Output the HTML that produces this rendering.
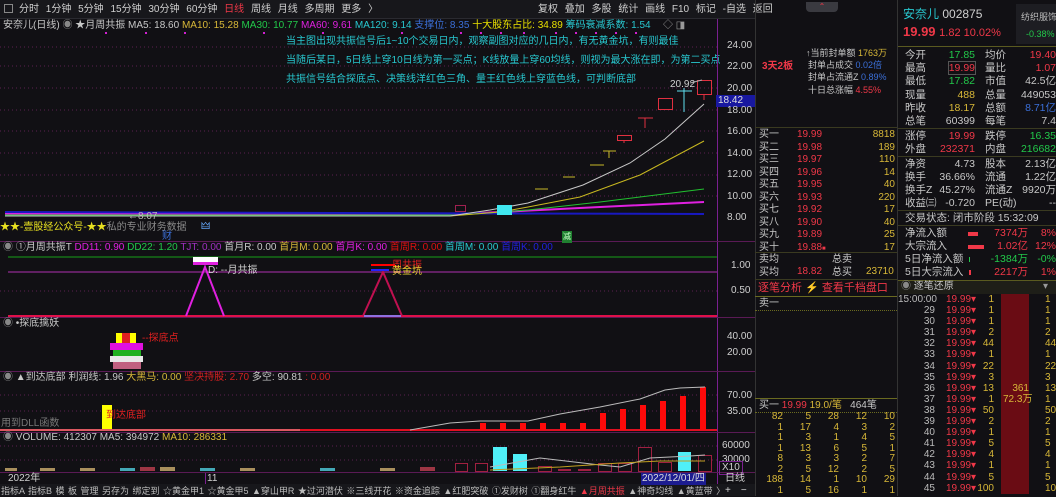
<!DOCTYPE html><html><head><meta charset="utf-8"><style>
*{margin:0;padding:0;box-sizing:border-box}
body{width:1056px;height:496px;background:#111014;overflow:hidden;position:relative;font-family:"Liberation Sans","Noto Sans CJK SC",sans-serif;font-size:10px;color:#c8c8c8}
.a{position:absolute;white-space:nowrap;line-height:12px}
.r{color:#f03848}.g{color:#22c84a}.y{color:#d8b838}.c{color:#28c8d0}.w{color:#d0d0d0}.m{color:#e020e0}.b{color:#3b6fd8}
.rt{text-align:right}
</style></head><body>
<div class="a" style="left:0;top:0;width:755px;height:19px;background:#17171b;border-bottom:1px solid #2a2a30"></div>
<div class="a" style="left:4px;top:4px;width:9px;height:9px;border:1px solid #888"></div>
<div class="a w" style="left:19px;top:4px;word-spacing:4px">分时 1分钟 5分钟 15分钟 30分钟 60分钟 <span class="r">日线</span> 周线 月线 多周期 更多 〉</div>
<div class="a w" style="left:538px;top:4px;word-spacing:4px">复权 叠加 多股 统计 画线 F10 标记 -自选 返回</div>
<div class="a" style="left:806px;top:2px;width:32px;height:10px;background:#3a3a40;border-radius:0 0 4px 4px;color:#f03848;font-size:8px;text-align:center;line-height:9px">⌃</div>
<div class="a" style="left:3px;top:20px">安奈儿(日线) <span style="color:#888">◉</span> ★月周共振 MA5: 18.60 <span class="y">MA10: 15.28</span> <span class="g">MA30: 10.77</span> <span class="m">MA60: 9.61</span> <span class="c">MA120: 9.14</span> <span class="b">支撑位: 8.35</span> <span style="color:#e8e000">十大股东占比: 34.89</span> <span class="c">筹码衰减系数: 1.54</span></div>
<div class="a" style="left:663px;top:20px;color:#999">◇ ◨</div>
<div class="a c" style="left:286px;top:36px">当主图出现共振信号后1~10个交易日内，观察副图对应的几日内，有无黄金坑，有则最佳</div>
<div class="a c" style="left:286px;top:55px">当随后某日，5日线上穿10日线为第一买点；K线放量上穿60均线，则视为最大涨在即，为第二买点</div>
<div class="a c" style="left:286px;top:74px">共振信号结合探底点、决策线洋红色三角、量王红色线上穿蓝色线，可判断底部</div>
<svg class="a" style="left:0;top:0" width="756" height="496">
<g stroke="#5a2050" stroke-dasharray="1 3"><line x1="0" y1="47" x2="717" y2="47"/><line x1="0" y1="66" x2="717" y2="66"/><line x1="0" y1="88" x2="717" y2="88"/><line x1="0" y1="110" x2="717" y2="110"/><line x1="0" y1="131" x2="717" y2="131"/><line x1="0" y1="153" x2="717" y2="153"/><line x1="0" y1="175" x2="717" y2="175"/><line x1="0" y1="196" x2="717" y2="196"/><line x1="0" y1="291" x2="717" y2="291"/><line x1="0" y1="395" x2="717" y2="395"/><line x1="0" y1="411" x2="717" y2="411"/><line x1="0" y1="446" x2="717" y2="446"/><line x1="0" y1="460" x2="717" y2="460"/></g>
<g fill="#d020d0"><rect x="105" y="32" width="2" height="2"/><rect x="145" y="32" width="2" height="2"/><rect x="184" y="32" width="2" height="2"/><rect x="263" y="32" width="2" height="2"/><rect x="322" y="32" width="2" height="2"/><rect x="401" y="32" width="2" height="2"/><rect x="460" y="32" width="2" height="2"/><rect x="480" y="32" width="2" height="2"/><rect x="500" y="32" width="2" height="2"/><rect x="523" y="32" width="2" height="2"/><rect x="555" y="32" width="2" height="2"/><rect x="575" y="32" width="2" height="2"/><rect x="595" y="32" width="2" height="2"/><rect x="615" y="32" width="2" height="2"/><rect x="635" y="32" width="2" height="2"/></g>
<line x1="717.5" y1="19" x2="717.5" y2="484" stroke="#7a2090"/>
<g stroke="#5a1a55"><line x1="0" y1="241.5" x2="755" y2="241.5"/><line x1="0" y1="317.5" x2="755" y2="317.5"/><line x1="0" y1="371.5" x2="755" y2="371.5"/><line x1="0" y1="432.5" x2="755" y2="432.5"/><line x1="0" y1="472.5" x2="755" y2="472.5"/></g>
<polyline points="5,214 460,214 520,211 600,207 704,202" fill="none" stroke="#e020e0" stroke-width="2"/>
<line x1="5" y1="212" x2="704" y2="214" stroke="#1818c0" stroke-width="2"/>
<polyline points="5,215 460,215 528,210 600,202 704,189" fill="none" stroke="#22c030" stroke-width="1"/>
<polyline points="5,216 450,216 500,212 528,207 580,197 640,175 704,141" fill="none" stroke="#c8b820" stroke-width="1"/>
<polyline points="5,216 450,216 490,210 528,203 583,185 630,163 665,139 704,104" fill="none" stroke="#c8c8c8" stroke-width="1"/>
<g stroke="#c8b828"><line x1="535" y1="189" x2="548" y2="189"/><line x1="563" y1="177" x2="575" y2="177"/><line x1="590" y1="165" x2="604" y2="165"/><line x1="603" y1="151" x2="616" y2="151"/><line x1="609" y1="151" x2="609" y2="158"/></g>
<rect x="497" y="205" width="15" height="10" fill="#40e8f0"/>
<rect x="617.5" y="135.5" width="14" height="5" fill="none" stroke="#e03040"/>
<line x1="624" y1="140" x2="624" y2="143" stroke="#e03040"/>
<g stroke="#e03040"><line x1="638" y1="118" x2="653" y2="118"/><line x1="645" y1="118" x2="645" y2="128"/></g>
<rect x="658.5" y="98.5" width="14" height="11" fill="none" stroke="#e03040"/>
<g stroke="#60e0f0"><line x1="677" y1="91" x2="692" y2="91"/><line x1="684" y1="88" x2="684" y2="112"/></g>
<rect x="697.5" y="80.5" width="14" height="14" fill="none" stroke="#e03040"/>
<line x1="704" y1="95" x2="704" y2="100" stroke="#e03040"/>
<line x1="690" y1="83" x2="702" y2="80" stroke="#aaa"/>
<rect x="455.5" y="205.5" width="10" height="6" fill="none" stroke="#a02050"/>
<line x1="8" y1="257" x2="717" y2="257" stroke="#18a018"/>
<line x1="8" y1="272" x2="717" y2="272" stroke="#b030b0"/>
<line x1="8" y1="316" x2="717" y2="316" stroke="#e0104a" stroke-width="2"/>
<rect x="193" y="257" width="25" height="5" fill="#fff"/><rect x="193" y="262" width="25" height="3" fill="#e020e0"/>
<polyline points="186,316 205,267 224,316" fill="none" stroke="#e020e0" stroke-width="2"/>
<polyline points="363,316 383,272 402,316" fill="none" stroke="#c01050" stroke-width="2"/>
<line x1="364" y1="316" x2="401" y2="316" stroke="#9070e0" stroke-width="2"/>
<rect x="371" y="264" width="24" height="2" fill="#f00"/><rect x="371" y="269" width="18" height="2" fill="#22f"/>
<rect x="116" y="333" width="6" height="10" fill="#ff0"/><rect x="122" y="333" width="8" height="10" fill="#e02020"/><rect x="130" y="333" width="6" height="10" fill="#ff0"/>
<rect x="110" y="343" width="33" height="7" fill="#e010e0"/><rect x="113" y="350" width="28" height="6" fill="#20b020"/><rect x="110" y="356" width="33" height="6" fill="#e8e8e8"/><rect x="113" y="362" width="28" height="7" fill="#c06080"/>
<rect x="102" y="405" width="10" height="26" fill="#ff0"/>
<line x1="0" y1="430" x2="717" y2="430" stroke="#e01020" stroke-width="2"/>
<line x1="0" y1="430" x2="300" y2="430" stroke="#d8a0a0" stroke-width="1"/>
<g fill="#ff0a0a"><rect x="480" y="423" width="6" height="7"/><rect x="500" y="423" width="6" height="7"/><rect x="520" y="423" width="6" height="7"/><rect x="540" y="423" width="6" height="7"/><rect x="560" y="423" width="6" height="7"/><rect x="580" y="423" width="6" height="7"/><rect x="600" y="413" width="6" height="17"/><rect x="620" y="409" width="6" height="21"/><rect x="640" y="405" width="6" height="25"/><rect x="660" y="401" width="6" height="29"/><rect x="680" y="396" width="6" height="34"/><rect x="700" y="387" width="6" height="43"/></g>
<polyline points="410,430 450,423 480,421 528,421 560,414 600,407 640,399 665,390 680,388 705,387" fill="none" stroke="#bbb"/>
<g fill="#d0b070" opacity=".8"><rect x="5" y="468" width="12" height="3"/><rect x="40" y="468" width="15" height="3"/><rect x="80" y="468" width="15" height="3"/><rect x="120" y="468" width="15" height="3" fill="#50d0e0"/><rect x="140" y="467" width="15" height="4" fill="#c04050"/><rect x="160" y="467" width="15" height="4"/><rect x="200" y="468" width="15" height="3" fill="#50d0e0"/><rect x="240" y="468" width="15" height="3"/><rect x="320" y="468" width="15" height="3" fill="#50d0e0"/><rect x="380" y="468" width="15" height="3"/><rect x="420" y="467" width="15" height="4" fill="#c04050"/></g>
<rect x="455.5" y="463.5" width="12" height="8" fill="none" stroke="#a02040"/><rect x="475.5" y="463.5" width="12" height="8" fill="none" stroke="#a02040"/>
<rect x="493" y="447" width="14" height="24" fill="#50f0f8"/><rect x="513" y="454" width="14" height="17" fill="#50f0f8"/>
<rect x="538.5" y="466.5" width="13" height="5" fill="none" stroke="#a02040"/><rect x="558" y="469" width="13" height="2" fill="#a02040"/><rect x="578" y="469" width="13" height="2" fill="#a02040"/>
<rect x="598.5" y="463.5" width="13" height="8" fill="none" stroke="#a02040"/><rect x="618.5" y="463.5" width="13" height="8" fill="none" stroke="#a02040"/>
<rect x="638.5" y="447.5" width="13" height="24" fill="none" stroke="#a02040"/><rect x="658.5" y="462.5" width="13" height="9" fill="none" stroke="#a02040"/>
<rect x="678" y="452" width="13" height="19" fill="#50f0f8"/><rect x="698.5" y="455.5" width="13" height="16" fill="none" stroke="#a02040"/>
<polyline points="490,467 540,458 600,465 620,467 650,458 690,456 705,455" fill="none" stroke="#bbb"/>
<polyline points="490,470 560,467 620,463 660,461 705,461" fill="none" stroke="#c0a020"/>
<line x1="205.5" y1="473" x2="205.5" y2="484" stroke="#7a2090"/>
<rect x="0" y="484" width="755" height="12" fill="#17171b"/>
</svg>
<div class="a w" style="left:670px;top:79px">20.92</div>
<div class="a" style="left:0;top:222px;color:#e8e020">★★-壹股经公众号-★★<span style="color:#888">私的专业财务数据</span></div>
<div class="a" style="left:128px;top:211px;color:#bbb">←8.07</div>
<div class="a b" style="left:162px;top:231px">财</div>
<div class="a" style="left:201px;top:221px;color:#60a0f0">🜲</div>
<div class="a" style="left:562px;top:231px;background:#208030;color:#cfc;font-size:8px;padding:0 1px">减</div>
<div class="a" style="left:3px;top:242px"><span style="color:#888">◉</span> ①月周共振T <span class="m">DD11: 0.90</span> <span class="g">DD22: 1.20</span> <span style="color:#a030c0">TJT: 0.00</span> 首月R: 0.00 <span class="y">首月M: 0.00</span> <span class="m">首月K: 0.00</span> <span style="color:#e01010">首周R: 0.00</span> <span class="c">首周M: 0.00</span> <span style="color:#2020e0">首周K: 0.00</span></div>
<div class="a w" style="left:208px;top:265px">D: --月共振</div>
<div class="a" style="left:392px;top:260px;color:#e02020">周共振</div>
<div class="a" style="left:392px;top:266px;color:#e8d030">黄金坑</div>
<div class="a" style="left:3px;top:318px"><span style="color:#888">◉</span> •探底擒妖</div>
<div class="a" style="left:142px;top:333px;color:#e02020">--探底点</div>
<div class="a" style="left:3px;top:372px"><span style="color:#888">◉</span> ▲到达底部 利润线: 1.96 <span class="y">大黑马: 0.00</span> <span style="color:#d02020">坚决持股: 2.70</span> 多空: 90.81 <span style="color:#d02020">: 0.00</span></div>
<div class="a" style="left:106px;top:410px;color:#e02020">到达底部</div>
<div class="a" style="left:1px;top:418px;color:#777">用到DLL函数</div>
<div class="a" style="left:3px;top:432px"><span style="color:#888">◉</span> VOLUME: 412307 MA5: 394972 <span class="y">MA10: 286331</span></div>
<div class="a w" style="left:8px;top:473px">2022年</div>
<div class="a w" style="left:207px;top:473px">11</div>
<div class="a" style="left:641px;top:473px;background:#1c1c90;color:#ddd;padding:0 1px">2022/12/01/四</div>
<div class="a" style="left:1px;top:485px;color:#bbb;font-size:9px;word-spacing:1px">指标A 指标B 模 板 管理 另存为 绑定到 ☆黄金甲1 ☆黄金甲5 ▲穿山甲R ★过河潜伏 ※三线开花 ※资金追踪 ▲红肥突破 ①发财树 ①翻身红牛 <span class="r">▲月周共振</span> ▲神奇均线 ▲黄蓝带 〉</div>
<div class="a w" style="left:725px;top:485px">+　−</div>
<div class="a w" style="left:727px;top:40px">24.00</div>
<div class="a w" style="left:727px;top:61px">22.00</div>
<div class="a w" style="left:727px;top:83px">20.00</div>
<div class="a" style="left:716px;top:95px;width:40px;background:#1818a0;color:#ddd;padding-left:2px">18.42</div>
<div class="a w" style="left:727px;top:105px">18.00</div>
<div class="a w" style="left:727px;top:126px">16.00</div>
<div class="a w" style="left:727px;top:148px">14.00</div>
<div class="a w" style="left:727px;top:169px">12.00</div>
<div class="a w" style="left:727px;top:191px">10.00</div>
<div class="a w" style="left:727px;top:212px">8.00</div>
<div class="a w" style="left:731px;top:260px">1.00</div>
<div class="a w" style="left:731px;top:285px">0.50</div>
<div class="a w" style="left:727px;top:331px">40.00</div>
<div class="a w" style="left:727px;top:347px">20.00</div>
<div class="a w" style="left:727px;top:390px">70.00</div>
<div class="a w" style="left:727px;top:406px">35.00</div>
<div class="a w" style="left:722px;top:440px">60000</div>
<div class="a w" style="left:722px;top:454px">30000</div>
<div class="a w" style="left:719px;top:461px;border:1px solid #7a2090;padding:0 2px">X10</div>
<div class="a w" style="left:725px;top:473px">日线</div>
<div class="a" style="left:755px;top:0;width:1px;height:496px;background:#333"></div>
<div class="a" style="left:897px;top:0;width:1px;height:496px;background:#333"></div>
<div class="a" style="left:755px;top:127px;width:142px;height:1px;background:#3a3a20"></div>
<div class="a" style="left:755px;top:252px;width:142px;height:1px;background:#3a3a20"></div>
<div class="a" style="left:755px;top:279px;width:142px;height:1px;background:#3a3a20"></div>
<div class="a" style="left:755px;top:296px;width:142px;height:1px;background:#6a6a20"></div>
<div class="a" style="left:755px;top:398px;width:142px;height:1px;background:#6a6a20"></div>
<div class="a" style="left:806px;top:47px;font-size:9px">↑当前封单额 <span class="y">1763万</span></div>
<div class="a" style="left:762px;top:61px;color:#f03848;font-weight:bold">3天2板</div>
<div class="a" style="left:808px;top:59px;font-size:9px">封单占成交 <span class="b">0.02倍</span></div>
<div class="a" style="left:808px;top:71px;font-size:9px">封单占流通Z <span class="b">0.89%</span></div>
<div class="a" style="left:808px;top:84px;font-size:9px">十日总涨幅 <span class="r">4.55%</span></div>
<div class="a" style="left:759px;top:129px;line-height:12.5px">买一<br>买二<br>买三<br>买四<br>买五<br>买六<br>买七<br>买八<br>买九<br>买十</div>
<div class="a r" style="left:797px;top:129px;line-height:12.5px">19.99<br>19.98<br>19.97<br>19.96<br>19.95<br>19.93<br>19.92<br>19.90<br>19.89<br>19.88<span style="font-size:6px">■</span></div>
<div class="a y rt" style="left:850px;top:129px;width:45px;line-height:12.5px">8818<br>189<br>110<br>14<br>40<br>220<br>17<br>40<br>25<br>17</div>
<div class="a" style="left:759px;top:254px;line-height:12.5px">卖均<br>买均</div>
<div class="a r" style="left:797px;top:266px">18.82</div>
<div class="a" style="left:832px;top:254px;line-height:12.5px">总卖<br>总买</div>
<div class="a y" style="left:866px;top:266px">23710</div>
<div class="a r" style="left:758px;top:282px;font-size:11px">逐笔分析 <span style="color:#c8a830">⚡</span> 查看千档盘口</div>
<div class="a" style="left:759px;top:298px">卖一</div>
<div class="a" style="left:755px;top:310px;width:142px;border-top:1px dotted #6a6a20"></div>
<div class="a" style="left:759px;top:400px">买一 <span class="r">19.99</span> <span class="y">19.0/笔</span>&nbsp;&nbsp;&nbsp;464笔</div>
<div class="a" style="left:755px;top:412px;width:142px;border-top:1px dotted #6a6a20"></div>
<div class="a y" style="left:755px;top:412px;width:142px;line-height:10.5px;font-size:10px">
<div style="display:grid;grid-template-columns:28px 28px 28px 28px 28px;text-align:right">
<span>82</span><span>5</span><span>28</span><span>12</span><span>10</span>
<span>1</span><span>17</span><span>4</span><span>3</span><span>2</span>
<span>1</span><span>3</span><span>1</span><span>4</span><span>5</span>
<span>1</span><span>13</span><span>6</span><span>5</span><span>1</span>
<span>8</span><span>3</span><span>3</span><span>2</span><span>7</span>
<span>2</span><span>5</span><span>12</span><span>2</span><span>5</span>
<span>188</span><span>14</span><span>1</span><span>10</span><span>29</span>
<span>1</span><span>5</span><span>16</span><span>1</span><span>1</span></div></div>
<div class="a" style="left:903px;top:8px;font-size:12px"><span class="c">安奈儿</span> <span class="w">002875</span></div>
<div class="a" style="left:1016px;top:4px;width:40px;height:40px;background:#1d1d22"></div>
<div class="a" style="left:1021px;top:11px;font-size:9px;color:#bbb">纺织服饰</div>
<div class="a g" style="left:1026px;top:28px;font-size:9px">-0.38%</div>
<div class="a r" style="left:903px;top:24px;font-size:13px;font-weight:bold;line-height:15px">19.99 <span style="font-weight:normal;font-size:11px">1.82 10.02%</span></div>
<div class="a" style="left:898px;top:46px;width:158px;height:1px;background:#5a5a20"></div>
<div class="a" style="left:905px;top:49px;line-height:13.2px;font-size:10.5px">今开<br>最高<br>最低<br>现量<br>昨收<br>总笔</div>
<div class="a rt" style="left:930px;top:49px;width:45px;line-height:13.2px;font-size:10.5px"><span class="g">17.85</span><br><span class="r" style="outline:1px solid #555">19.99</span><br><span class="g">17.82</span><br><span class="y">488</span><br><span class="y">18.17</span><br>60399</div>
<div class="a" style="left:985px;top:49px;line-height:13.2px;font-size:10.5px">均价<br>量比<br>市值<br>总量<br>总额<br>每笔</div>
<div class="a rt" style="left:1010px;top:49px;width:46px;line-height:13.2px;font-size:10.5px"><span class="r">19.40</span><br><span class="r">1.07</span><br>42.5亿<br>449053<br><span class="b">8.71亿</span><br>7.4</div>
<div class="a" style="left:898px;top:128px;width:158px;height:1px;background:#3a3a20"></div>
<div class="a" style="left:905px;top:130px;line-height:13px;font-size:10.5px">涨停<br>外盘</div>
<div class="a rt r" style="left:930px;top:130px;width:45px;line-height:13px;font-size:10.5px">19.99<br>232371</div>
<div class="a" style="left:985px;top:130px;line-height:13px;font-size:10.5px">跌停<br>内盘</div>
<div class="a rt g" style="left:1010px;top:130px;width:46px;line-height:13px;font-size:10.5px">16.35<br>216682</div>
<div class="a" style="left:898px;top:156px;width:158px;height:1px;background:#3a3a20"></div>
<div class="a" style="left:905px;top:158px;line-height:13px;font-size:10.5px">净资<br>换手<br>换手Z<br>收益㈢</div>
<div class="a rt" style="left:930px;top:158px;width:45px;line-height:13px;font-size:10.5px">4.73<br>36.66%<br>45.27%<br>-0.720</div>
<div class="a" style="left:985px;top:158px;line-height:13px;font-size:10.5px">股本<br>流通<br>流通Z<br>PE(动)</div>
<div class="a rt" style="left:1010px;top:158px;width:46px;line-height:13px;font-size:10.5px">2.13亿<br>1.22亿<br>9920万<br>--</div>
<div class="a" style="left:898px;top:210px;width:158px;height:1px;background:#3a3a20"></div>
<div class="a" style="left:905px;top:212px;font-size:10.5px">交易状态: 闭市阶段 15:32:09</div>
<div class="a" style="left:898px;top:225px;width:158px;height:1px;background:#3a3a20"></div>
<div class="a" style="left:905px;top:227px;line-height:13px;font-size:10.5px">净流入额<br>大宗流入<br>5日净流入额<br>5日大宗流入</div>
<div class="a" style="left:968px;top:232px;width:10px;height:4px;background:#f03848"></div>
<div class="a" style="left:968px;top:245px;width:16px;height:4px;background:#f03848"></div>
<div class="a" style="left:969px;top:257px;width:1px;height:5px;background:#22c84a"></div>
<div class="a" style="left:969px;top:270px;width:2px;height:5px;background:#f03848"></div>
<div class="a rt" style="left:980px;top:227px;width:48px;line-height:13px;font-size:10.5px"><span class="r">7374万</span><br><span class="r">1.02亿</span><br><span class="g">-1384万</span><br><span class="r">2217万</span></div>
<div class="a rt" style="left:1030px;top:227px;width:26px;line-height:13px;font-size:10.5px"><span class="r">8%</span><br><span class="r">12%</span><br><span class="g">-0%</span><br><span class="r">1%</span></div>
<div class="a" style="left:898px;top:280px;width:158px;height:14px;background:#1e1e18;border-top:1px solid #5a5a20"></div>
<div class="a" style="left:901px;top:281px"><span style="color:#888">◉</span> 逐笔还原</div>
<div class="a" style="left:1043px;top:281px;color:#999">▾</div>
<div class="a" style="left:1001px;top:294px;width:28px;height:200px;background:#6a0c14"></div>
<div class="a y" style="left:1007px;top:383px;line-height:11px;text-align:right;width:22px">361</div>
<div class="a y" style="left:1003px;top:394px">72.3万</div>
<div class="a rt" style="left:898px;top:294px;width:37px;line-height:11.1px;color:#bbb">15:00:00<br>29<br>30<br>31<br>32<br>33<br>34<br>35<br>36<br>37<br>38<br>39<br>40<br>41<br>42<br>43<br>44<br>45</div>
<div class="a r" style="left:946px;top:294px;line-height:11.1px">19.99▾<br>19.99▾<br>19.99▾<br>19.99▾<br>19.99▾<br>19.99▾<br>19.99▾<br>19.99▾<br>19.99▾<br>19.99▾<br>19.99▾<br>19.99▾<br>19.99▾<br>19.99▾<br>19.99▾<br>19.99▾<br>19.99▾<br>19.99▾</div>
<div class="a y rt" style="left:974px;top:294px;width:20px;line-height:11.1px">1<br>1<br>1<br>2<br>44<br>1<br>22<br>3<br>13<br>1<br>50<br>2<br>1<br>5<br>4<br>1<br>5<br>100</div>
<div class="a y" style="left:1045px;top:294px;line-height:11.1px">1<br>1<br>1<br>2<br>44<br>1<br>22<br>3<br>13<br>1<br>50<br>2<br>1<br>5<br>4<br>1<br>5<br>100</div>
</body></html>
